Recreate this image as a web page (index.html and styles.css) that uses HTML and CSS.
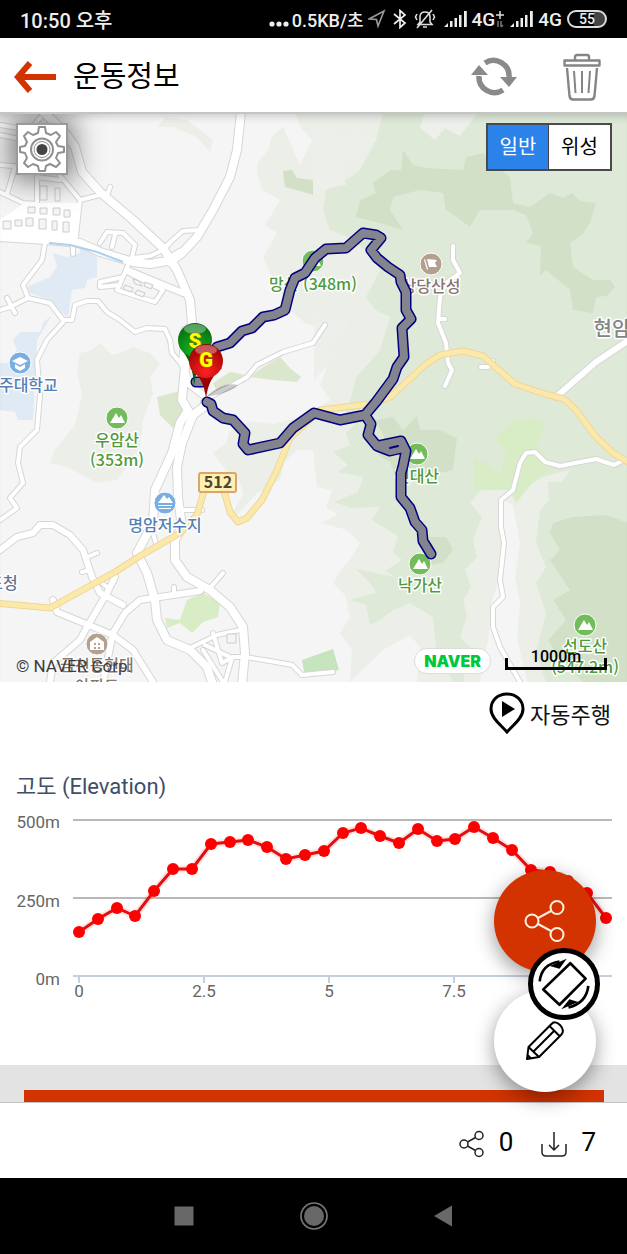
FILE: index.html
```html
<!DOCTYPE html>
<html lang="ko">
<head>
    <meta charset="UTF-8">
    <meta name="viewport" content="width=device-width, initial-scale=1.0">
    <title>운동정보</title>
    <link rel="stylesheet" href="styles.css">
</head>
<body>
    <div class="status-bar">
        <span class="clock">10:50 오후</span>
        <div class="status-icons">
            <svg width="20" height="20" viewBox="0 0 20 20" fill="#eee"><circle cx="3" cy="15" r="2.6"/><circle cx="10" cy="15" r="2.6"/><circle cx="17" cy="15" r="2.6"/></svg>
            <span class="speed">0.5KB/초</span>
            <svg class="gps" width="18" height="20" viewBox="0 0 18 20" fill="none" stroke="#999" stroke-width="1.6"><path d="M1 10 L16 2 L10 17 L8.500 10.500 Z"/></svg>
            <svg class="bt" width="14" height="20" viewBox="0 0 14 20" fill="none" stroke="#eee" stroke-width="1.7"><path d="M1 5 L12 14 L7 18.500 V1.500 L12 6 L1 15"/></svg>
            <svg class="bell" width="22" height="20" viewBox="0 0 22 20" fill="none" stroke="#ddd" stroke-width="1.600"><path d="M4 15.500 L6 13 V8 Q6 3 11 3 Q16 3 16 8 V13 L18 15.500 Z M9 18 H13 M3 19 L18 1 M3 5 L1.500 8 L3 11 M19 5 L20.500 8 L19 11"/></svg>
            <svg class="signal" width="24" height="18" viewBox="0 0 24 18" fill="#eee"><path d="M0 17 L4 13 V17 Z M6 11 h2.500 v6 h-2.500 Z M10.500 8 h2.500 v9 h-2.500 Z M15 5 h2.500 v12 h-2.500 Z M20 1 h2.800 v16 h-2.800 Z"/></svg>
            <span class="net">4G</span>
            <svg class="plus" width="10" height="18" viewBox="0 0 10 18" fill="none" stroke="#ddd" stroke-width="1.500"><path d="M1 5 H9 M5 1 V9"/><path stroke="#777" d="M3 17 V11 M6 11 V17 M8 15 L6 17"/></svg>
            <svg class="signal" width="24" height="18" viewBox="0 0 24 18" fill="#eee"><path d="M0 17 L4 13 V17 Z M6 11 h2.500 v6 h-2.500 Z M10.500 8 h2.500 v9 h-2.500 Z M15 5 h2.500 v12 h-2.500 Z M20 1 h2.800 v16 h-2.800 Z"/></svg>
            <span class="net">4G</span>
            <span class="battery">55</span>
        </div>
    </div>

    <header class="header">
        <button class="icon-btn" aria-label="뒤로">
            <svg width="44" height="34" viewBox="0 0 44 34"><path d="M43 17 H8 M17 3 L5 17 L17 31" fill="none" stroke="#d23300" stroke-width="6"/></svg>
        </button>
        <h1>운동정보</h1>
        <button class="icon-btn" aria-label="새로고침">
            <svg width="48" height="40" viewBox="0 0 48 40" fill="none" stroke="#8a8a8a" stroke-width="5.500"><path d="M15 6 A15.500 15.500 0 0 1 39 20 M33 33 A15.500 15.500 0 0 1 9 19"/><path fill="#8a8a8a" stroke="none" d="M30 20 H47 L39 30 Z M1 18 H18 L9 8 Z"/></svg>
        </button>
        <button class="icon-btn trash" aria-label="삭제">
            <svg width="38" height="48" viewBox="0 0 38 48" fill="none" stroke="#858585" stroke-width="2.400" stroke-linejoin="round"><path d="M1.500 7.500 H36.500 V12.500 H1.500 Z M12 7 V4 Q12 2 14 2 H24 Q26 2 26 4 V7 M4 15 L6.500 43 Q7 46.500 10 46.500 H28 Q31 46.500 31.500 43 L34 15"/><path stroke-width="2" d="M11 18 L12.500 40 M19 18 V40 M27 18 L25.500 40"/></svg>
        </button>
    </header>

    <section class="map">
        <svg class="map-canvas" viewBox="0 114 627 568" preserveAspectRatio="xMidYMid slice">
            <rect class="land" x="-400" y="112" width="1600" height="570"/>

            <!-- forest layers -->
            <path class="forest1" d="M283 127 L272 136 L268 150 L258 162 L257 172 L262 190 L280 200 L265 225 L277 233 L263 257 L270 273 L290 310 L305 323 L325 330 L318 350 L328 365 L320 385 L330 400 L313 412 L290 420 L272 424 L250 421 L230 431 L226 443 L213 453 L226 470 L240 482 L243 495 L228 520 L240 512 L256 494 L280 480 L284 462 L297 450 L313 450 L317 487 L332 490 L326 508 L338 514 L322 523 L347 530 L360 543 L350 560 L343 567 L333 583 L345 595 L350 617 L340 633 L352 650 L350 682 L383 650 L410 635 L420 647 L417 682 H700 V112 H295 L301 128 L312 140 L300 165 Z"/>
            <path class="forest2" d="M383 112 L376 140 L360 170 L346 180 L326 190 L323 210 L330 230 L350 238 L373 257 L380 270 L366 297 L375 310 L390 317 L380 350 L370 362 L356 377 L352 395 L346 412 L355 424 L346 433 L350 445 L333 452 L348 465 L338 472 L363 477 L358 492 L334 502 L352 508 L380 507 L372 520 L398 536 L393 552 L402 560 L385 571 L396 577 L356 569 L370 583 L376 593 L350 600 L366 605 L370 625 L380 620 L390 612 L410 603 L433 617 L436 647 L453 682 H463 L470 647 L460 637 L467 615 L463 600 L471 587 L465 570 L477 557 L473 540 L482 517 L470 503 L481 490 L506 490 H520 L545 476 L570 470 L562 482 L548 482 L549 500 L540 510 L536 543 L546 567 L536 583 L546 613 L536 653 L546 682 H700 V112 Z"/>
            <path class="land" d="M503 500 L513 505 L520 543 L515 577 L520 603 L517 637 L527 682 H480 L488 640 L491 603 L500 577 Z"/>
            <path class="land2" d="M314 123 L330 128 L345 132 L360 128 L376 140 L360 158 L340 165 L346 185 L325 188 L313 190 Z M425 112 L420 128 L435 140 L445 128 L460 136 L478 112 Z M314 300 L325 320 L350 316 L343 340 L328 346 L345 360 L325 368 L314 380 Z"/>
            <path class="forest3" d="M403 150 L413 165 L426 168 L463 170 L466 157 L483 153 L510 177 L513 203 L530 207 L550 193 L563 198 L572 193 L580 201 L596 203 L590 223 L582 235 L570 243 L573 267 L593 280 L610 280 L615 287 L607 296 L596 297 L593 313 L573 310 L570 290 L546 270 L540 276 L541 246 L526 243 L533 233 L526 215 L513 210 L480 210 L470 227 L458 218 L446 210 L443 193 L420 190 L393 197 L390 210 L403 230 L380 223 L356 217 L360 200 L376 193 L373 183 L390 170 L401 170 Z M376 420 L393 417 L403 430 L417 416 L420 430 L440 430 L457 438 L453 470 L440 473 L423 480 L395 475 L390 462 L378 455 L384 437 Z M553 523 L573 517 L606 515 L640 527 V690 H590 L556 653 L548 640 L566 620 L553 600 L570 590 L550 560 L560 550 L550 533 Z M421 537 L446 537 L453 550 L443 563 L426 566 Z M283 171 L292 170 L297 178 L313 180 V195 L300 191 L285 187 Z"/>
            <path class="forest1" d="M166 117 L187 120 L213 140 L210 152 L197 137 L173 127 L157 127 Z M80 353 L90 351 L100 343 L112 355 L120 353 L133 347 L150 353 L160 363 L150 377 L153 393 L143 420 L140 447 L117 480 L97 483 L67 467 L50 463 L55 450 L75 425 L82 395 L77 370 Z"/>
            <path class="park" d="M213 383 L230 372 L246 375 L246 382 L217 392 Z M250 377 L263 367 L280 357 L290 368 L301 377 L297 382 L273 380 Z M157 397 L180 391 L187 417 L173 428 L160 415 Z"/>
            <path class="park2" d="M165 618 L180 620 L187 600 L203 593 L220 603 L218 617 L203 622 L192 633 L180 623 L167 628 Z M500 433 L514 420 L530 417 L545 422 L541 437 L536 443 L543 455 L553 467 L533 482 L516 503 L510 490 H474 V458 L490 465 L501 473 L506 450 L494 440 Z"/>
            <path class="park3" d="M302 660 L333 649 L339 670 L305 677 Z"/>
            <path class="water" d="M53 253 L67 257 L80 253 L80 247 L97 253 V277 L87 280 L85 288 L72 290 L68 317 L62 313 L50 300 L30 293 L27 287 L50 277 L57 267 Z M52 315 L43 323 L40 332 L20 332 L13 340 L17 350 L7 363 H0 V410 L15 412 L18 420 H33 L35 380 L37 340 Z"/>

            <!-- roads: wide casing first, white surface on top -->
            <defs>
                <g id="roads-wide">
                    <path d="M43 112 L63 130 L75 147 L82 172 L100 192 L133 220 L163 248 L177 270 L190 300 L192 323 L187 343 L182 400 L188 410 L180 423 L172 453 L155 490 L153 523 L137 553 L147 573 L155 600 L157 620 L167 640 L190 650 L207 667 L213 685"/>
                    <path d="M241 112 L237 150 L230 177 L213 210 L197 237 L182 253 L170 262"/>
                    <path d="M205 406 L193 415 L182 443 L177 467 L178 497 L182 527 L175 540 L175 560 L187 577 L210 590 L230 607 L243 627 L245 653 L242 685"/>
                    <path d="M0 237 L47 240 L80 243 L100 252 L133 262 L150 264 L167 261 L180 253"/>
                </g>
                <g id="roads-mid">
                    <path d="M200 591 L173 595 L140 600 L125 613 L113 633 L103 682"/>
                    <path d="M0 550 L17 537 L33 533 L40 525 H53 L70 535 L83 550 L92 577 L100 593 L123 605"/>
                    <path d="M115 577 L107 593 L87 627 L80 640 L53 663 L50 682"/>
                    <path d="M53 600 L57 612 L113 635 L133 650 L153 682"/>
                    <path d="M185 330 L182 362 L190 385 L207 398 M127 270 L183 293"/>
                    <path d="M556 397 L596 362 L635 336"/>
                </g>
                <g id="roads-thin">
                    <path d="M200 230 L183 231 L167 245 M133 258 L150 256 L163 250 L170 243 M80 200 L108 193 L110 187"/>
                    <path d="M45 243 L42 260 L23 285 L28 298 L50 303 L63 320 H72 L75 305 L87 301 H98 L107 312 L120 320 L135 332 L147 328 L165 329 L170 340 L172 353 L182 365"/>
                    <path d="M65 320 L47 340 L37 360 L40 395 L37 430 L20 447 L18 463 L23 483 L10 498 L17 508 L0 520 M28 298 L10 307 L0 310 M7 298 L15 313"/>
                    <path d="M128 265 L123 277 L100 282 V287 L120 285 M123 277 L117 290 L155 302 L163 290 L127 272 M100 243 L107 232 L123 233 L135 245 L132 257 M115 235 L112 247"/>
                    <path d="M80 200 L57 172 M80 200 L75 245 M73 240 V254 M0 192 L23 203 L37 204 V177 L60 180 M15 167 L7 194 M0 165 L14 166 M0 135 L25 140 V150 M0 125 L30 130 L40 118"/>
                    <path d="M217 393 L233 385 L247 377 L257 365 L283 352 L313 343 L325 325 M203 402 L217 393"/>
                    <path d="M453 246 V260 L460 273 L446 283 L440 297 L438 323 L446 343 L448 363 L452 370 L445 386 M440 319 h5 M481 367 h7 l5 -6"/>
                    <path d="M620 462 L614 465 L596 459 L560 466 L545 462 L535 452 L526 453 L520 463 L513 490 L501 500 V527 L504 543 L500 580 L503 597 L493 607 V627 L500 647 L520 682 M270 661 L292 665 L302 675 L333 672"/>
                    <path d="M210 588 L223 573 M174 587 V596 M180 510 H202 M152 530 L157 547 M85 558 L97 553 M82 572 L90 570 M107 587 L102 583 M190 648 L217 635 L240 630 M213 633 L222 663 L233 657 L245 657 L270 661 M203 650 L223 682 M205 645 L232 658 L225 682"/>
                </g>
            </defs>
            <use class="casing wide" href="#roads-wide"/>
            <use class="casing mid" href="#roads-mid"/>
            <use class="casing thin" href="#roads-thin"/>
            <use class="road wide" href="#roads-wide"/>
            <use class="road mid" href="#roads-mid"/>
            <use class="road thin" href="#roads-thin"/>
            <path class="stream" d="M49 243 L70 245 L97 252 L123 262"/>
            <path fill="#fff" d="M24 203 H79 L76 238 H0 V220 Z"/>
            <path class="block" d="M28 207 h7 v6 h-7 Z M40 208 h7 v6 h-7 Z M53 208 h7 v7 h-7 Z M64 210 h6 v7 h-6 Z M26 218 h7 v8 h-7 Z M39 219 h7 v10 h-7 Z M52 221 h5 v9 h-5 Z M63 222 h6 v10 h-6 Z M3 221 h8 v8 h-8 Z M15 220 h7 v6 h-7 Z M40 186 h7 v14 h-7 Z M55 188 h5 v13 h-5 Z M133 279 l6 2 l3 5 l-7 -2 Z M145 282 l8 3 l-2 4 l-7 -3 Z M227 634 h9 v9 h-9 Z M125 285 l8 3 l-2 4 l-8 -3 Z M137 290 l8 3 l-2 4 l-8 -3 Z"/>
            <g class="highway">
                <path id="hw" d="M635 466 L613 453 L596 437 L576 410 L564 399 L545 394 L515 384 L500 371 L483 356 L463 351 L440 355 L425 365 L390 397 L370 404 L320 410 L290 438 L277 470 L262 500 L247 518 L238 522 L230 512 L224 491 M204 491 L197 515 L180 533 L140 556 L115 572 L50 608 L-5 603"/>
                <use class="highway-top" href="#hw"/>
            </g>

            <!-- places -->
            <g class="places">
                <g fill="#73bc5b">
                    <circle cx="313" cy="261" r="11"/><circle cx="117" cy="418" r="11"/><circle cx="417" cy="454" r="11"/><circle cx="420" cy="564" r="11"/><circle cx="585" cy="625" r="11"/>
                </g>
                <circle cx="20" cy="363" r="11" fill="#7aaee0"/><circle cx="165" cy="503" r="11" fill="#7aaee0"/>
                <circle cx="431" cy="264" r="11" fill="#b3a08e"/><circle cx="97" cy="644" r="11" fill="#b3a08e"/>
                <path class="glyph" d="M110 423 L116 413 L119 418 L121 415 L125 423 Z M306 266 L312 256 L315 261 L317 258 L321 266 Z M410 459 L416 449 L419 454 L421 451 L425 459 Z M413 569 L419 559 L422 564 L424 561 L428 569 Z M578 630 L584 620 L587 625 L589 622 L593 630 Z M158 503 L164 495 L167 499 L169 497 L173 503 Z M158 505 h14 v1 h-14 Z M159 508 h12 v1 h-12 Z M12 361 L20 357 L28 361 L20 365 Z M15 364 L20 367 L25 364 V368 L20 371 L15 368 Z M425 259 L428 269 L427 270 L424 260 Z M427 259 L437 260 L435 263 L437 267 L429 267 Z M97 637 L104 642 V650 H90 V642 Z"/>
                <path fill="#b3a08e" d="M94 643 h2 v2 h-2 Z M98 643 h2 v2 h-2 Z M94 647 h2 v2 h-2 Z M98 647 h2 v2 h-2 Z"/>
                <text class="peak" x="313" y="290">망산 (348m)</text>
                <text class="peak" x="117" y="446">우암산</text>
                <text class="peak" x="117" y="466">(353m)</text>
                <text class="peak" x="417" y="482">것대산</text>
                <text class="peak" x="420" y="591">낙가산</text>
                <text class="peak" x="585" y="652">선도산</text>
                <text class="peak" x="585" y="673">(547.2m)</text>
                <text class="lake" x="165" y="531">명암저수지</text>
                <text class="lake" x="21" y="391">청주대학교</text>
                <text class="office" x="3" y="589">도청</text>
                <text class="site" x="431" y="292">상당산성</text>
                <text class="town" x="612" y="336">현암</text>
                <text class="site" x="97" y="671">금천동현대</text>
                <text class="site" x="97" y="692">아파트</text>
                <rect class="shield" x="199" y="473" width="37" height="19" rx="2"/>
                <text class="shield-no" x="218" y="488">512</text>
            </g>

            <!-- track -->
            <g class="track">
                <path id="track" d="M203 382 H196 M217 347 L230 343 L242 331 L252 328 L263 317 L274 315 L285 310 L290 290 L295 278 L305 273 L315 258 L326 249 L346 248 L363 233 L376 235 L381 238 L371 250 L377 258 L388 267 L400 275 L401 282 L406 292 V310 L411 319 L402 328 L404 357 L397 367 L393 379 L376 402 L365 415 M207 402 L211 404 L213 411 L223 418 L233 420 L245 433 L243 444 L248 450 L280 443 L293 428 L314 413 L340 420 L365 415 L371 424 L368 435 L377 446 L401 441 L406 451 L403 466 L401 473 V497 L410 508 L415 522 L422 530 L423 541 L431 554 M377 446 L390 451 L403 448"/>
                <use class="track-top" href="#track"/>
                <path class="track-gap" d="M390 448 L398 446"/>
            </g>

            <!-- start and goal pins -->
            <defs>
                <radialGradient id="pin-s" cx=".5" cy=".8" r=".8"><stop offset="0" stop-color="#16b622"/><stop offset="1" stop-color="#056b10"/></radialGradient>
                <radialGradient id="pin-g" cx=".5" cy=".8" r=".8"><stop offset="0" stop-color="#f22"/><stop offset="1" stop-color="#900"/></radialGradient>
            </defs>
            <path fill="#0003" d="M206 397 Q222 381 238 385 Q230 393 206 397 Z"/>
            <path fill="#075f12" d="M180 348 Q193 362 194 386 Q197 362 210 348 Z"/>
            <circle cx="195" cy="340" r="17" fill="url(#pin-s)"/>
            <ellipse cx="195" cy="329" rx="11" ry="5" fill="#fff5"/>
            <text class="pin-text" x="195" y="348">S</text>
            <path fill="#900" d="M190 368 Q204 378 206 399 Q208 378 222 368 Z"/>
            <circle cx="206" cy="361" r="17" fill="url(#pin-g)"/>
            <ellipse cx="206" cy="350" rx="11" ry="5" fill="#fff5"/>
            <text class="pin-text" x="206" y="367">G</text>
        </svg>

        <button class="map-settings" aria-label="지도 설정">
            <svg width="48" height="48" viewBox="0 0 48 48" fill="none" stroke="#909090" stroke-width="2"><path stroke-linejoin="round" d="M21 2 H27 L28 8 L33 10 L38 7 L42 11 L38 17 L40 21 L46 22 V27 L40 28 L38 33 L42 38 L38 42 L32 39 L28 41 L27 46 H21 L20 41 L15 39 L10 42 L6 38 L9 33 L7 28 L2 27 V22 L7 21 L9 17 L6 11 L10 7 L15 10 L20 8 Z"/><circle cx="24" cy="24.500" r="11"/><circle cx="24" cy="24.500" r="8" stroke-width="1"/><circle cx="24" cy="24.500" r="5.500" fill="#444" stroke="none"/></svg>
        </button>
        <div class="map-type">
            <button class="active">일반</button><button>위성</button>
        </div>
        <span class="copyright">© NAVER Corp.</span>
        <div class="map-foot">
            <span class="naver">NAVER</span>
            <span class="scale">1000m</span>
        </div>
    </section>

    <main class="detail">
        <button class="autoplay">
            <svg width="36" height="42" viewBox="0 0 36 42"><path d="M18 40 C12 33 2 26 2 17 C2 8 9 2 18 2 C27 2 34 8 34 17 C34 26 24 33 18 40 Z" fill="#fff" stroke="#000" stroke-width="3"/><path d="M13 9 L26 17 L13 25 Z"/></svg>
            자동주행
        </button>
        <h2>고도 (Elevation)</h2>
        <svg class="chart" viewBox="0 803 627 215">
            <path class="grid" d="M73 820 H612 M73 898 H612"/>
            <path class="axis" d="M73 976 H612 M79 976 V983 M204 976 V983 M329 976 V983 M454 976 V983"/>
            <g class="y-labels"><text x="60" y="828">500m</text><text x="60" y="907">250m</text><text x="60" y="985">0m</text></g>
            <g class="x-labels"><text x="79" y="997">0</text><text x="204" y="997">2.5</text><text x="329" y="997">5</text><text x="454" y="997">7.5</text></g>
            <g id="series"></g>
        </svg>

        <div class="ad-area"><div class="ad-block"></div></div>

        <div class="fabs">
            <button class="fab share" aria-label="공유">
                <svg width="42" height="44" viewBox="0 0 42 44" fill="none" stroke="#fff0e0" stroke-width="2"><circle cx="8" cy="22" r="6.500"/><circle cx="33" cy="8.500" r="6.500"/><circle cx="33" cy="35.500" r="6.500"/><path d="M14 19 L27 12 M14 25 L27 32"/></svg>
            </button>
            <button class="fab edit" aria-label="편집">
                <svg width="40" height="40" viewBox="0 0 40 40" fill="none" stroke="#000" stroke-width="2" stroke-linejoin="round"><path d="M2 38 L3.500 26 L26 3.500 Q30 -1 35 4 Q40 9 36.500 13.500 L14 36 Z M3.500 26 L14 36 M24.500 5 L34.500 15 M8.500 30.500 L29.500 9.500 M2.500 34 L6 37.500"/></svg>
            </button>
            <button class="rotate" aria-label="화면 회전">
                <svg width="54" height="54" viewBox="0 0 60 60" fill="none" stroke="#000" stroke-width="3" stroke-linejoin="round"><path d="M37 7 L54 24 L25 53 L7 36 Z"/><path d="M3 27 Q5 8 25 5 M57 32 Q55 51 35 56"/><path fill="#000" stroke="none" d="M14 10 L33 2 L25 13 Z M46 50 L27 58 L36 47 Z"/></svg>
            </button>
        </div>
    </main>

    <footer class="counts">
        <svg width="26" height="28" viewBox="0 0 26 28" fill="none" stroke="#222" stroke-width="1.500"><circle cx="5" cy="14" r="4"/><circle cx="20" cy="5.500" r="4"/><circle cx="20" cy="22.500" r="4"/><path d="M8.500 12 L16.500 7.500 M8.500 16 L16.500 20.500"/></svg>
        <span>0</span>
        <svg class="download" width="26" height="28" viewBox="0 0 26 28" fill="none" stroke="#222" stroke-width="1.500"><path d="M1 14 V22 Q1 26 5 26 H21 Q25 26 25 22 V14 M13 2 V20 M8 15 L13 20 L18 15"/></svg>
        <span>7</span>
    </footer>

    <nav class="nav-bar">
        <button aria-label="최근 앱"><svg width="28" height="28" viewBox="0 0 28 28"><rect x="4.500" y="4.500" width="19" height="19" fill="#686868"/></svg></button>
        <button aria-label="홈"><svg width="28" height="28" viewBox="0 0 28 28"><circle cx="14" cy="14" r="13" fill="none" stroke="#777" stroke-width="1.700"/><circle cx="14" cy="14" r="10" fill="#686868"/></svg></button>
        <button aria-label="이전"><svg width="28" height="28" viewBox="0 0 28 28"><path d="M4 14 L22 3.500 V24.500 Z" fill="#686868"/></svg></button>
    </nav>

    <script>
        // y position of every elevation sample
        let points = [932, 919, 908, 916, 891, 869, 869, 844, 842, 840, 847, 859, 855, 851, 833, 828, 836, 843, 829, 841, 839, 827, 838, 850, 870, 872, 881, 893, 918];
        let step = 527 / (points.length - 1);
        let line = "";
        let dots = "";

        points.forEach((y, i) => {
            let x = Math.round(79 + i * step);
            line += (i ? " L" : "M") + x + " " + y;
            dots += `<circle cx="${x}" cy="${y}" r="6"/>`;
        });
        document.getElementById("series").innerHTML =
            `<path class="line-shadow" d="${line}"/><path class="line" d="${line}"/><g class="dots">${dots}</g>`;
    </script>
</body>
</html>
```

FILE: styles.css
```css
* {
    box-sizing: border-box;
}
body {
    font-family: Roboto, 'Noto Sans CJK KR', sans-serif;
    background-color: #fff;
    color: #111;
    display: flex;
    flex-direction: column;
    min-height: 100vh;
    margin: 0;
}
button {
    font-family: inherit;
    background: none;
    border: 0;
    padding: 0;
    cursor: pointer;
}
svg {
    display: block;
}

/* status bar */
.status-bar {
    height: 38px;
    background: #000;
    color: #eee;
    display: flex;
    align-items: center;
    justify-content: space-between;
    padding: 0 20px;
    font-size: 19px;
    font-weight: 500;
}
.clock {
    font-size: 20px;
}
.status-icons {
    display: flex;
    align-items: center;
}
.speed {
    margin-left: 3px;
    font-size: 18px;
}
.gps {
    margin-left: 4px;
}
.bt, .bell {
    margin-left: 7px;
}
.signal {
    margin: 0 4px 0 5px;
}
.bell + .signal {
    margin-left: 8px;
}
.battery {
    width: 40px;
    height: 18px;
    margin-left: 5px;
    border: 2px solid #ddd;
    border-radius: 9px;
    background: linear-gradient(90deg, #000 70%, #444 70%);
    font-size: 14px;
    line-height: 14px;
    text-align: center;
}

/* header */
.header {
    height: 74px;
    display: flex;
    align-items: center;
    padding: 4px 26px 0 13px;
}
.header h1 {
    flex: 1;
    margin: 0 0 0 16px;
    font-size: 29px;
    line-height: 40px;
    font-weight: 400;
    color: #000;
}
.trash {
    margin-left: 45px;
}

/* map */
.map {
    position: relative;
    height: 570px;
    border-top: 2px solid #c4c4c4;
    box-shadow: inset 0 8px 8px -6px rgba(0, 0, 0, 0.2);
    overflow: hidden;
}
.map-canvas {
    width: 100%;
    height: 100%;
    position: relative;
    z-index: -1;
    font-family: 'Noto Sans CJK KR', sans-serif;
}
.land, .block {
    fill: #f5f5f5;
}
.land2 {
    fill: #edf0ea;
}
.forest1 {
    fill: #ebefe8;
}
.forest2 {
    fill: #dfe9d8;
}
.forest3 {
    fill: #d2e0c8;
}
.park {
    fill: #dae7cc;
}
.park2 {
    fill: #d8ecc6;
}
.park3 {
    fill: #c6e4bd;
}
.water {
    fill: #e0eaf5;
}
.stream {
    fill: none;
    stroke: #acd1ee;
    stroke-width: 2;
}
.block {
    stroke: #ccc;
}
.casing, .road, .highway {
    fill: none;
    stroke-linejoin: round;
    stroke-linecap: round;
}
.casing {
    stroke: #d6d6d6;
}
.road {
    stroke: #fff;
}
.casing.wide {
    stroke-width: 10px;
}
.road.wide {
    stroke-width: 8px;
}
.casing.mid {
    stroke-width: 8px;
}
.road.mid {
    stroke-width: 6px;
}
.casing.thin {
    stroke-width: 6px;
}
.road.thin {
    stroke-width: 4px;
}
.highway {
    stroke: #efd797;
    stroke-width: 7px;
}
.highway-top {
    stroke: #fbe8ab;
    stroke-width: 5px;
}
.places circle {
    stroke: #fff;
}
.glyph {
    fill: #fff;
}
.places text {
    font-size: 16px;
    font-weight: 500;
    text-anchor: middle;
    paint-order: stroke;
    stroke: #fff;
    stroke-width: 3px;
    stroke-linejoin: round;
}
.peak {
    fill: #4f9a3c;
}
.lake {
    fill: #5580b5;
}
.office {
    fill: #66718f;
}
.site {
    fill: #85766f;
}
.places .town {
    font-size: 20px;
    fill: #858585;
}
.shield {
    fill: #fdf0b4;
    stroke: #d9a56b;
    stroke-width: 2px;
}
.places .shield-no {
    font-weight: 700;
    fill: #54442c;
    stroke: none;
}
.track {
    fill: none;
    stroke: #000080;
    stroke-width: 11px;
    stroke-linejoin: round;
    stroke-linecap: round;
}
.track-top {
    stroke: #84848f;
    stroke-width: 8px;
}
.track-gap {
    stroke-width: 2px;
}
.pin-text {
    font-family: Roboto, sans-serif;
    font-size: 20px;
    font-weight: 900;
    text-anchor: middle;
    fill: #ff0;
    stroke: #a60;
    stroke-width: 1px;
    paint-order: stroke;
}
.map-settings {
    position: absolute;
    top: 9px;
    left: 16px;
    width: 52px;
    height: 52px;
    border: 2px solid #999;
    background: #fff;
    box-shadow: 0 0 28px 6px rgba(0, 0, 0, 0.5);
}
.map-type {
    position: absolute;
    top: 9px;
    right: 15px;
    display: flex;
    border: 2px solid #4a4a4a;
    background: #fff;
}
.map-type button {
    width: 61px;
    height: 44px;
    padding-bottom: 4px;
    font-size: 20px;
    color: #000;
}
.map-type .active {
    background: #2b82e8;
    color: #fff;
    border-right: 1px solid #444;
}
.copyright {
    position: absolute;
    left: 16px;
    bottom: 6px;
    font-size: 17px;
    line-height: 20px;
    color: #3c3c3c;
}
.map-foot {
    position: absolute;
    right: 20px;
    bottom: 8px;
    display: flex;
    align-items: flex-end;
    gap: 14px;
}
.naver {
    padding: 0 9px;
    border: 1px solid #ddd;
    border-radius: 13px;
    background: #fff;
    color: #00c73c;
    font-family: Inter, sans-serif;
    font-size: 16px;
    line-height: 24px;
    font-weight: 900;
}
.scale {
    width: 102px;
    height: 22px;
    margin-bottom: 4px;
    color: #000;
    font-size: 16px;
    line-height: 18px;
    font-weight: 500;
    text-align: center;
    background:
        linear-gradient(#000, #000) left bottom / 3px 12px no-repeat,
        linear-gradient(#000, #000) right bottom / 3px 12px no-repeat,
        linear-gradient(#000, #000) left bottom / 100% 3px no-repeat;
}

/* elevation */
.detail {
    position: relative;
    flex: 1;
    display: flex;
    flex-direction: column;
}
.autoplay {
    display: flex;
    align-items: center;
    align-self: flex-end;
    gap: 5px;
    height: 62px;
    margin-right: 16px;
    font-size: 22px;
    color: #111;
}
.detail h2 {
    margin: 27px 16px 0;
    font-size: 22px;
    line-height: 32px;
    font-weight: 400;
    color: #3e4e66;
}
.chart {
    width: 100%;
}
.grid, .axis {
    fill: none;
    stroke: #b9b9b9;
    stroke-width: 2px;
}
.axis {
    stroke: #c6cfdc;
}
.chart text {
    font-size: 17px;
    fill: #666;
}
.y-labels {
    text-anchor: end;
}
.x-labels {
    text-anchor: middle;
}
.line, .line-shadow {
    fill: none;
    stroke: #e01010;
    stroke-width: 3px;
}
.line-shadow {
    stroke: rgba(255, 0, 0, 0.12);
    stroke-width: 7px;
}
.dots {
    fill: #f00;
}
.ad-area {
    margin-top: auto;
    padding: 25px 23px 0 24px;
    background: #e3e3e3;
    border-bottom: 1px solid #c4c4c4;
}
.ad-block {
    height: 12px;
    background: #d23300;
}
.fabs {
    position: absolute;
    right: 31px;
    bottom: 11px;
    display: flex;
    flex-direction: column;
    gap: 18px;
}
.fab, .rotate {
    display: flex;
    align-items: center;
    justify-content: center;
    border-radius: 50%;
    background: #fff;
}
.fab {
    width: 102px;
    height: 102px;
    box-shadow: 0 6px 20px rgba(0, 0, 0, 0.4);
}
.share {
    background: #d23300;
}
.rotate {
    position: absolute;
    top: 78px;
    right: -4px;
    width: 72px;
    height: 72px;
    border: 5px solid #000;
}

/* bottom */
.counts {
    height: 75px;
    display: flex;
    align-items: center;
    justify-content: flex-end;
    padding: 2px 31px 0 0;
    font-size: 26px;
    color: #000;
}
.counts svg {
    margin-top: 4px;
}
.counts span {
    margin-left: 14px;
}
.counts .download {
    margin-left: 28px;
}
.nav-bar {
    height: 76px;
    background: #000;
    display: flex;
    align-items: center;
    justify-content: center;
    gap: 102px;
}
```
